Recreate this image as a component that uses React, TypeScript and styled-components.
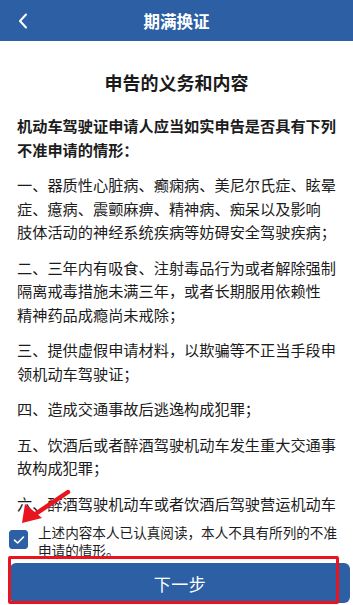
import React, { useState } from 'react';
import { styled, createGlobalStyle } from 'styled-components';

const GlobalStyle = createGlobalStyle`
  html, body {
    margin: 0;
    padding: 0;
    background: #ffffff;
  }
  body {
    font-family: 'Noto Sans CJK SC', 'Noto Sans', sans-serif;
    color: #1c1c1c;
  }
  * {
    box-sizing: border-box;
  }
`;

const INTRO = ['机动车驾驶证申请人应当如实申告是否具有下列', '不准申请的情形：'];

const ITEMS = [
  ['一、器质性心脏病、癫痫病、美尼尔氏症、眩晕', '症、癔病、震颤麻痹、精神病、痴呆以及影响', '肢体活动的神经系统疾病等妨碍安全驾驶疾病；'],
  ['二、三年内有吸食、注射毒品行为或者解除强制', '隔离戒毒措施未满三年，或者长期服用依赖性', '精神药品成瘾尚未戒除；'],
  ['三、提供虚假申请材料，以欺骗等不正当手段申', '领机动车驾驶证；'],
  ['四、造成交通事故后逃逸构成犯罪；'],
  ['五、饮酒后或者醉酒驾驶机动车发生重大交通事', '故构成犯罪；'],
  ['六、醉酒驾驶机动车或者饮酒后驾驶营运机动车', '依法被吊销机动车驾驶证未满五年；']
];

const App = () => {
  const [checked, setChecked] = useState(true);

  return (
    <>
      <GlobalStyle />
      <S.Page>
        <S.Header>
          <S.BackButton>
            <svg width="10" height="16" viewBox="0 0 10 16">
              <path d="M8 1.5 L2 8 L8 14.5" fill="none" stroke="#ffffff" strokeWidth="2" strokeLinecap="round" strokeLinejoin="round" />
            </svg>
          </S.BackButton>
          <S.HeaderTitle>期满换证</S.HeaderTitle>
        </S.Header>

        <S.Content>
          <S.Title>申告的义务和内容</S.Title>
          <S.Paragraph $bold>
            {INTRO.map((line) => (
              <S.Line key={line}>{line}</S.Line>
            ))}
          </S.Paragraph>
          {ITEMS.map((lines) => (
            <S.Paragraph key={lines[0]}>
              {lines.map((line) => (
                <S.Line key={line}>{line}</S.Line>
              ))}
            </S.Paragraph>
          ))}
        </S.Content>

        <S.Footer>
          <S.AgreeRow onClick={() => setChecked(!checked)}>
            <S.CheckBox $checked={checked}>
              {checked && (
                <svg width="12" height="10" viewBox="0 0 12 10">
                  <path d="M1.5 5.2 L4.6 8 L10.5 2" fill="none" stroke="#ffffff" strokeWidth="1.6" strokeLinecap="round" strokeLinejoin="round" />
                </svg>
              )}
            </S.CheckBox>
            <S.AgreeText>上述内容本人已认真阅读，本人不具有所列的不准申请的情形。</S.AgreeText>
          </S.AgreeRow>
          <S.NextButton>下一步</S.NextButton>
        </S.Footer>

        <S.Arrow width="60" height="42" viewBox="0 0 60 42">
          <path d="M51 6 L17 29" stroke="#e8151f" strokeWidth="4.5" strokeLinecap="round" />
          <path d="M5 37 L8 18 L25 32 Z" fill="#e8151f" />
        </S.Arrow>
        <S.Highlight />
      </S.Page>
    </>
  );
};

export default App;

const S = {
  Page: styled.div`
    position: relative;
    display: flex;
    flex-direction: column;
    width: 353px;
    height: 605px;
    overflow: hidden;
    background: #ffffff;
  `,
  Header: styled.div`
    position: relative;
    display: flex;
    align-items: center;
    justify-content: center;
    height: 41px;
    flex-shrink: 0;
    background: #2c5fa4;
  `,
  BackButton: styled.div`
    position: absolute;
    left: 18px;
    top: 13px;
    display: flex;
  `,
  HeaderTitle: styled.div`
    color: #ffffff;
    font-size: 16.5px;
    font-weight: 600;
    line-height: 22px;
  `,
  Content: styled.div`
    flex: 1;
    overflow: hidden;
    padding: 29px 17px 0 17px;
  `,
  Title: styled.div`
    text-align: center;
    font-size: 18px;
    font-weight: 700;
    line-height: 24px;
    margin-bottom: 20px;
    color: #1a1a1a;
  `,
  Paragraph: styled.div<{ $bold?: boolean }>`
    margin: 0 0 12px 0;
    font-size: 15.2px;
    line-height: 23.5px;
    font-weight: ${(p) => (p.$bold ? 700 : 400)};
    color: #1c1c1c;
  `,
  Line: styled.div`
    white-space: nowrap;
  `,
  Footer: styled.div`
    flex-shrink: 0;
    display: flex;
    flex-direction: column;
    gap: 4px;
    height: 87px;
    padding: 5px 3px 2px 10px;
    background: #ffffff;
  `,
  AgreeRow: styled.div`
    display: flex;
    align-items: center;
    gap: 10px;
    margin-left: -1px;
    height: 36px;
    cursor: pointer;
  `,
  CheckBox: styled.div<{ $checked: boolean }>`
    display: flex;
    align-items: center;
    justify-content: center;
    width: 19px;
    height: 19px;
    flex-shrink: 0;
    border-radius: 3px;
    margin-top: -3px;
    background: ${(p) => (p.$checked ? '#2c5fa4' : '#ffffff')};
    border: 1px solid #2c5fa4;
  `,
  AgreeText: styled.div`
    font-size: 13.6px;
    line-height: 18px;
    color: #1c1c1c;
  `,
  NextButton: styled.div`
    display: flex;
    align-items: center;
    justify-content: center;
    height: 40px;
    border-radius: 6px;
    background: #2c5fa4;
    color: #ffffff;
    font-size: 17px;
    letter-spacing: 0.5px;
  `,
  Arrow: styled.svg`
    position: absolute;
    left: 17px;
    top: 486px;
  `,
  Highlight: styled.div`
    position: absolute;
    left: 8px;
    top: 556px;
    width: 331px;
    height: 48px;
    border: 3px solid #e8151f;
    border-radius: 2px;
  `
};
